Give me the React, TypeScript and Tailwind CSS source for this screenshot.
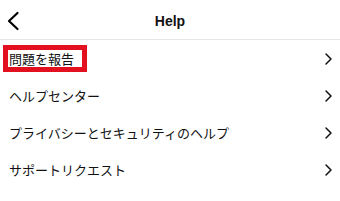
import React from "react";

const rows = [
  "問題を報告",
  "ヘルプセンター",
  "プライバシーとセキュリティのヘルプ",
  "サポートリクエスト",
];

function ChevronRight() {
  return (
    <svg width="10" height="14" viewBox="0 0 10 14" className="shrink-0">
      <path d="M3 2 L8 7 L3 12" fill="none" stroke="#111" strokeWidth="1.5" strokeLinecap="round" strokeLinejoin="round" />
    </svg>
  );
}

const jp = { fontFamily: '"Noto Sans CJK JP", sans-serif' };

export default function App() {
  return (
    <div
      className="w-[340px] h-[201px] bg-white text-[#111] overflow-hidden"
      style={{ fontFamily: '"Liberation Sans", "Noto Sans CJK JP", sans-serif' }}
    >
      <div className="relative h-[40px] flex items-center justify-center border-b border-[#e6e6e6]">
        <svg width="14" height="20" viewBox="0 0 14 20" className="absolute left-[6px] top-[11px]">
          <path d="M11.5 2 L3 10 L11.5 18" fill="none" stroke="#000" strokeWidth="2.2" strokeLinecap="round" strokeLinejoin="round" />
        </svg>
        <span className="text-[14px] font-bold mt-[4px]">Help</span>
      </div>
      <div className="flex flex-col">
        {rows.map((r, i) => (
          <div
            key={i}
            className={
              i === 0
                ? "h-[37px] flex items-center justify-between pl-[3px] pr-[7px]"
                : "h-[37px] flex items-center justify-between pl-[9px] pr-[7px]"
            }
          >
            {i === 0 ? (
              <span className="w-[84px] h-[27px] border-[5px] border-[#e3101f] flex items-center pl-[1px]">
                <span className="text-[13px] leading-none" style={jp}>{r}</span>
              </span>
            ) : (
              <span className="text-[13px] leading-none" style={jp}>
                {r}
              </span>
            )}
            <ChevronRight />
          </div>
        ))}
      </div>
    </div>
  );
}
